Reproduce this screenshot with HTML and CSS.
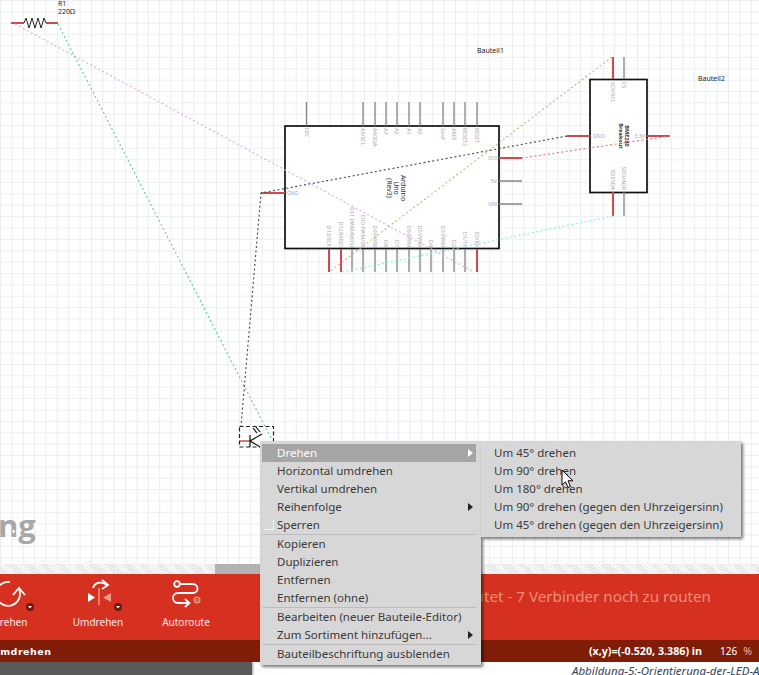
FILE: index.html
```html
<!DOCTYPE html>
<html lang="en">
<head>
    <meta charset="UTF-8">
    <title>Fritzing Schaltplan</title>
    <link rel="stylesheet" href="styles.css">
</head>
<body>
    <div class="app">
        <div class="canvas">
            <svg class="schematic" width="759" height="564" viewBox="0 0 759 564">
                <!-- resistor -->
                <path class="pin pin-red" d="M11 23H24M46 23H58"/>
                <path class="part-line" d="M24 23L26 18L29 28L32 18L35 28L38 18L41 28L44 18L46 23"/>
                <text class="ref" x="58" y="6">R1</text>
                <text class="ref" x="58" y="14">220Ω</text>

                <text class="ref" x="477" y="53">Bauteil1</text>
                <text class="ref" x="698" y="81">Bauteil2</text>

                <!-- arduino -->
                <rect class="box" x="285" y="126" width="214" height="122.5"/>
                <path class="pin" d="M306.5 102V126M363 102V126M375 102V126M386 102V126M397 102V126M409 102V126M420 102V126M443 102V126M454 102V126M465 102V126M477 102V126"/>
                <path class="pin" d="M352 249V272M363 249V272M375 249V272M386 249V272M397 249V272M409 249V272M420 249V272M431 249V272M443 249V272M454 249V272M465 249V272"/>
                <path class="pin" d="M499 181H522M499 204H522"/>
                <path class="pin pin-red" d="M329 249V272M341 249V272M477 249V272M499 158H522M261 193H285"/>

                <g class="pin-label">
                    <text transform="translate(304.500 128) rotate(90)">N/C</text>
                    <text transform="translate(361 128) rotate(90)">A5/SCL</text>
                    <text transform="translate(373 128) rotate(90)">A4/SDA</text>
                    <text transform="translate(384 128) rotate(90)">A3</text>
                    <text transform="translate(395 128) rotate(90)">A2</text>
                    <text transform="translate(407 128) rotate(90)">A1</text>
                    <text transform="translate(418 128) rotate(90)">A0</text>
                    <text transform="translate(441 128) rotate(90)">Ioref</text>
                    <text transform="translate(452 128) rotate(90)">AREF</text>
                    <text transform="translate(463 128) rotate(90)">RESET2</text>
                    <text transform="translate(475 128) rotate(90)">RESET</text>
                </g>
                <g class="pin-label label-end">
                    <text transform="translate(327 247) rotate(90)">D13/SCK</text>
                    <text transform="translate(339 247) rotate(90)">D12/MISO</text>
                    <text transform="translate(350 247) rotate(90)">D11 PWM/MOSI</text>
                    <text transform="translate(361 247) rotate(90)">D10 PWM/SS</text>
                    <text transform="translate(373 247) rotate(90)">D9 PWM</text>
                    <text transform="translate(384 247) rotate(90)">D8</text>
                    <text transform="translate(395 247) rotate(90)">D7</text>
                    <text transform="translate(407 247) rotate(90)">D6 PWM</text>
                    <text transform="translate(418 247) rotate(90)">D5 PWM</text>
                    <text transform="translate(429 247) rotate(90)">D4</text>
                    <text transform="translate(441 247) rotate(90)">D3 PWM</text>
                    <text transform="translate(452 247) rotate(90)">D2</text>
                    <text transform="translate(463 247) rotate(90)">D1/TX</text>
                    <text transform="translate(475 247) rotate(90)">D0/RX</text>
                    <text x="497" y="160">3V3</text>
                    <text x="497" y="183">5V</text>
                    <text x="497" y="206">VIN</text>
                </g>
                <text class="pin-label" x="287" y="195">GND</text>
                <g class="part-title">
                    <text transform="translate(400.500 188) rotate(90)">Arduino</text>
                    <text transform="translate(393.500 188) rotate(90)">Uno</text>
                    <text transform="translate(386.500 188) rotate(90)">(Rev3)</text>
                </g>

                <!-- breakout -->
                <rect class="box" x="590" y="79.500" width="57" height="113"/>
                <path class="pin" d="M624 57V79M624 192V216"/>
                <path class="pin pin-red" d="M613 57V79M613 192V216M567 136H590M647 136H670"/>
                <g class="pin-label">
                    <text transform="translate(611 82) rotate(90)">SCK/SCL</text>
                    <text transform="translate(622 82) rotate(90)">CS</text>
                    <text x="593" y="138">GND</text>
                </g>
                <g class="pin-label label-end">
                    <text transform="translate(611 190) rotate(90)">SDI/SDA</text>
                    <text transform="translate(622 190) rotate(90)">SDO/ADR</text>
                    <text x="645" y="138">3.3V</text>
                </g>
                <g class="part-title title-small">
                    <text transform="translate(625 136) rotate(90)">BME280</text>
                    <text transform="translate(619 136) rotate(90)">Breakout</text>
                </g>

                <!-- ratsnest wires -->
                <path class="wire wire-pink" d="M15 24L474 272"/>
                <path class="wire wire-green" d="M58 24L272 440"/>
                <path class="wire wire-black" d="M567 136L261 193L241 426"/>
                <path class="wire wire-tan" d="M612 57L329 272"/>
                <path class="wire wire-cyan" d="M613 216L342 272"/>
                <path class="wire wire-red" d="M670 136L522 158"/>

                <!-- led, selected -->
                <rect class="selection" x="239.500" y="426.500" width="34" height="20.500"/>
                <path class="pin pin-red pin-thin" d="M240 441H250"/>
                <path class="part-line part-heavy" d="M250 435V447M250 441L262 434M250 441L262 448M253 428L257 433M256 427L260 432"/>
            </svg>
            <div class="logo">ng<i class="logo-dot"></i></div>
        </div>

        <div class="hatch"><div class="scroll-thumb"></div></div>

        <div class="toolbar">
            <div class="tool tool-first">
                <svg width="60" height="36" viewBox="0 0 60 36">
                    <path class="icon" d="M37 11A12 12 0 1 1 28 4"/>
                    <path class="icon" d="M31 17L37 10L43 17"/>
                    <circle class="badge" cx="48" cy="29" r="4"/>
                    <path class="badge-arrow" d="M46 28H50L48 30.500Z"/>
                </svg>
                <span>Drehen</span>
            </div>
            <div class="tool">
                <svg width="60" height="36" viewBox="0 0 60 36">
                    <path class="icon-fill" d="M20 15L27 19.500L20 24Z"/>
                    <path class="icon-soft-fill" d="M43 15L35 19.500L43 24Z"/>
                    <path class="icon-soft" d="M31 10V27"/>
                    <path class="icon" d="M25 10C27 4 33 3 39 7"/>
                    <path class="icon" d="M34 2L40 7L34 11"/>
                    <circle class="badge" cx="50" cy="29" r="4"/>
                    <path class="badge-arrow" d="M48 28H52L50 30.500Z"/>
                </svg>
                <span>Umdrehen</span>
            </div>
            <div class="tool tool-wide">
                <svg width="64" height="36" viewBox="0 0 64 36">
                    <circle class="icon" cx="23" cy="6" r="2.800"/>
                    <path class="icon" d="M26 6H39A4.500 4.500 0 0 1 39 15H24A5 5 0 0 0 24 25H35"/>
                    <path class="icon" d="M31 21L35.500 25L31 29"/>
                    <circle class="icon-soft" cx="43" cy="22" r="2.800"/>
                    <circle class="icon-soft-fill" cx="43" cy="22" r="1"/>
                </svg>
                <span>Autoroute</span>
            </div>
            <div class="route-status">geroutet - 7 Verbinder noch zu routen</div>
        </div>

        <div class="statusbar">
            <span class="status-hint">Umdrehen</span>
            <span class="status-coords">(x,y)=(-0.520, 3.386) in</span>
            <span class="status-zoom">126</span>
            <span class="status-unit">%</span>
        </div>

        <div class="page-below">
            <div class="page-dark"></div>
            <div class="page-caption">Abbildung-5:-Orientierung-der-LED-Anschlüsse</div>
        </div>
    </div>

    <div class="menu menu-main">
        <div class="menu-item active has-sub">Drehen</div>
        <div class="menu-item">Horizontal umdrehen</div>
        <div class="menu-item">Vertikal umdrehen</div>
        <div class="menu-item has-sub">Reihenfolge</div>
        <div class="menu-item"><i class="check"></i>Sperren</div>
        <div class="menu-sep"></div>
        <div class="menu-item">Kopieren</div>
        <div class="menu-item">Duplizieren</div>
        <div class="menu-item">Entfernen</div>
        <div class="menu-item">Entfernen (ohne)</div>
        <div class="menu-sep"></div>
        <div class="menu-item">Bearbeiten (neuer Bauteile-Editor)</div>
        <div class="menu-item has-sub">Zum Sortiment hinzufügen...</div>
        <div class="menu-sep"></div>
        <div class="menu-item">Bauteilbeschriftung ausblenden</div>
    </div>

    <div class="menu menu-sub">
        <div class="menu-item">Um 45° drehen</div>
        <div class="menu-item">Um 90° drehen</div>
        <div class="menu-item">Um 180° drehen</div>
        <div class="menu-item">Um 90° drehen (gegen den Uhrzeigersinn)</div>
        <div class="menu-item">Um 45° drehen (gegen den Uhrzeigersinn)</div>
    </div>

    <svg class="cursor" width="14" height="20" viewBox="0 0 14 20">
        <path d="M1 1V16L4.500 12.800L7 18.500L9.500 17.400L7 11.800H12Z"/>
    </svg>
</body>
</html>
```

FILE: styles.css
```css
html, body {
    margin: 0;
    height: 100%;
}
body {
    position: relative;
    width: 759px;
    height: 675px;
    overflow: hidden;
    font-family: 'Noto Sans', sans-serif;
    background: #fff;
}
.app {
    display: flex;
    flex-direction: column;
    height: 675px;
}

/* schematic */
.canvas {
    position: relative;
    height: 564px;
    overflow: hidden;
    background-color: #fff;
    background-image:
        linear-gradient(to right, #e8edf3 1.4px, transparent 1.4px),
        linear-gradient(to bottom, #ebeff4 1.4px, transparent 1.4px);
    background-size: 11.38px 11.38px;
    background-position: 0 0;
}
.schematic {
    display: block;
}
.box {
    fill: #fff;
    stroke: #111;
    stroke-width: 1.700;
}
.pin {
    fill: none;
    stroke: #858585;
    stroke-width: 1.300;
}
.pin-red {
    stroke: #cf4a4a;
    stroke-width: 2;
}
.pin-thin {
    stroke-width: 1.500;
}
.part-line {
    fill: none;
    stroke: #222;
    stroke-width: 1;
}
.part-heavy {
    stroke: #111;
    stroke-width: 1.200;
}
.ref {
    font-size: 7px;
    fill: #222;
}
.pin-label {
    font-size: 5.300px;
    fill: #a8a8a8;
}
.label-end {
    text-anchor: end;
}
.part-title {
    font-size: 7px;
    fill: #333;
    text-anchor: middle;
}
.title-small {
    font-size: 5.500px;
    font-weight: 700;
}
.wire {
    fill: none;
    stroke-width: 1.100;
    stroke-dasharray: 2 2.500;
}
.wire-pink { stroke: #dcaada; }
.wire-green { stroke: #66cf86; }
.wire-black { stroke: #444; }
.wire-tan { stroke: #d0ae72; }
.wire-cyan { stroke: #80f2de; }
.wire-red { stroke: #e67474; }
.selection {
    fill: none;
    stroke: #222;
    stroke-width: 1.200;
    stroke-dasharray: 4 2.500;
}
.logo {
    position: absolute;
    left: -2px;
    top: 504px;
    font-family: 'Open Sans', sans-serif;
    font-size: 31px;
    font-weight: 700;
    line-height: 42px;
    color: #a8a8a8;
}
.logo-dot {
    position: absolute;
    left: 13px;
    top: 25px;
    width: 3px;
    height: 3px;
    border: 1px solid #a8a8a8;
    border-radius: 50%;
    background: #fff;
}

/* strip under the canvas */
.hatch {
    height: 10px;
    background-color: #fff;
    background-image: repeating-linear-gradient(45deg, #e4e4e4 0, #e4e4e4 1px, #fff 1px, #fff 2px);
}
.scroll-thumb {
    width: 45px;
    height: 10px;
    margin-left: 215px;
    background: #b2b2b2;
}

/* red toolbar */
.toolbar {
    display: flex;
    gap: 26px;
    height: 66px;
    background: #d63120;
    overflow: hidden;
}
.tool {
    display: flex;
    flex-direction: column;
    align-items: center;
    flex: none;
    width: 60px;
    padding-top: 4px;
    color: #fde6ea;
    font-size: 10px;
    line-height: 14px;
}
.tool svg {
    display: block;
    margin-bottom: 1px;
}
.tool-first {
    margin-left: -18px;
}
.tool-first span {
    margin-right: 4px;
}
.tool-wide {
    width: 64px;
}
.icon {
    fill: none;
    stroke: #fff;
    stroke-width: 1.800;
}
.icon-fill {
    fill: #fff;
}
.icon-soft {
    fill: none;
    stroke: #ee9a80;
    stroke-width: 1.500;
}
.icon-soft-fill {
    fill: #ee9a80;
}
.badge {
    fill: #6e1608;
}
.badge-arrow {
    fill: #fff;
}
.route-status {
    position: absolute;
    right: 48px;
    top: 585px;
    color: #ee8f78;
    font-size: 15.200px;
    line-height: 22px;
    white-space: nowrap;
}

/* status bar */
.statusbar {
    display: flex;
    align-items: center;
    height: 22px;
    background: #7f1d08;
    color: #fff;
    font-size: 10.500px;
}
.status-hint {
    margin-left: -8px;
    font-weight: 700;
    letter-spacing: 0.500px;
    font-family: 'DejaVu Sans', sans-serif;
    font-size: 9.500px;
}
.status-coords {
    margin-left: auto;
    font-weight: 700;
    font-family: 'Open Sans', sans-serif;
    font-size: 10.700px;
}
.status-zoom {
    margin-left: 18px;
    font-size: 10px;
}
.status-unit {
    margin-left: 6px;
    margin-right: 7px;
    font-size: 10.500px;
    color: #f0b8a8;
}

/* the page behind the app window */
.page-below {
    display: flex;
    height: 13px;
    overflow: hidden;
}
.page-dark {
    flex: none;
    width: 252px;
    background: #5a5a5a;
    box-shadow: 1px 0 2px #999;
}
.page-caption {
    margin-left: 320px;
    padding-top: 1px;
    color: #34435c;
    font-size: 11.500px;
    font-style: italic;
    line-height: 16px;
    white-space: nowrap;
}

/* context menus */
.menu {
    position: absolute;
    top: 441px;
    box-sizing: border-box;
    padding: 3px 5px 2px 2px;
    background: #d7d7d7;
    box-shadow: 2px 2px 3px rgba(0, 0, 0, 0.55);
    color: #3a3a3a;
    font-size: 11.500px;
}
.menu-main {
    left: 260px;
    width: 221px;
    height: 224px;
}
.menu-sub {
    left: 481px;
    width: 260px;
    height: 96px;
}
.menu-item {
    position: relative;
    height: 18px;
    padding-left: 15px;
    line-height: 18px;
    white-space: nowrap;
}
.menu-sub .menu-item {
    padding-left: 11px;
}
.menu-item.active {
    background: #a5a5a5;
    color: #fff;
}
.has-sub::after {
    content: "";
    position: absolute;
    right: 3px;
    top: 5px;
    border-left: 5px solid #222;
    border-top: 4px solid transparent;
    border-bottom: 4px solid transparent;
}
.active.has-sub::after {
    border-left-color: #fff;
}
.check {
    position: absolute;
    left: 2px;
    top: 3px;
    width: 9px;
    height: 10px;
    border-right: 1px solid #f4f4f4;
    border-bottom: 1px solid #f4f4f4;
}
.menu-sep {
    height: 1px;
    background: #bcbcbc;
}
.cursor {
    position: absolute;
    left: 561px;
    top: 469px;
}
.cursor path {
    fill: #fff;
    stroke: #000;
    stroke-width: 1;
}
```
